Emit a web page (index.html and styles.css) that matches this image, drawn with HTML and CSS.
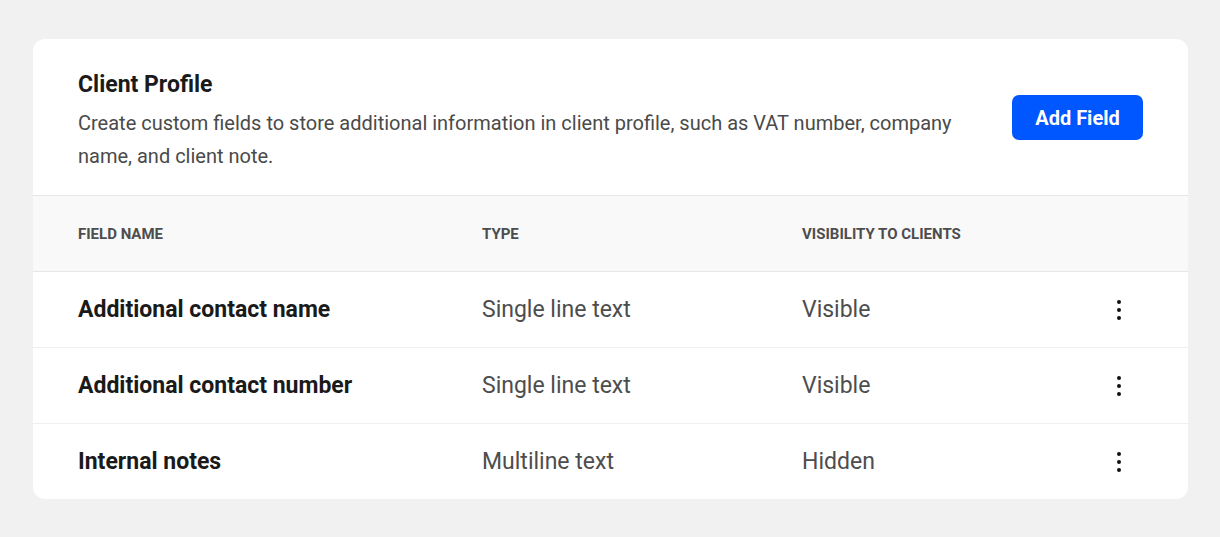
FILE: index.html
```html
<!DOCTYPE html>
<html lang="en">
<head>
  <meta charset="UTF-8">
  <title>Client Profile</title>
  <link rel="stylesheet" href="styles.css">
</head>
<body>
  <div class="card">
    <div class="card-head">
      <div class="card-intro">
        <h2 class="card-title">Client Profile</h2>
        <p class="card-desc">Create custom fields to store additional information in client profile, such as VAT number, company name, and client note.</p>
      </div>
      <button class="btn-primary">Add Field</button>
    </div>
    <div class="fields">
      <div class="fields-row fields-head">
        <span>Field name</span>
        <span>Type</span>
        <span>Visibility to clients</span>
        <span></span>
      </div>
      <div class="fields-row">
        <span class="field-name">Additional contact name</span>
        <span class="field-cell">Single line text</span>
        <span class="field-cell">Visible</span>
        <button class="more-btn" aria-label="More"><i></i><i></i><i></i></button>
      </div>
      <div class="fields-row">
        <span class="field-name">Additional contact number</span>
        <span class="field-cell">Single line text</span>
        <span class="field-cell">Visible</span>
        <button class="more-btn" aria-label="More"><i></i><i></i><i></i></button>
      </div>
      <div class="fields-row">
        <span class="field-name">Internal notes</span>
        <span class="field-cell">Multiline text</span>
        <span class="field-cell">Hidden</span>
        <button class="more-btn" aria-label="More"><i></i><i></i><i></i></button>
      </div>
    </div>
  </div>
</body>
</html>
```

FILE: styles.css
```css
body {
  margin: 0;
  padding: 39px 32px 39px 33px;
  background: #f1f1f1;
  font-family: Roboto, "Liberation Sans", sans-serif;
  color: #1a1a1a;
}

.card {
  background: #fff;
  border-radius: 12px;
  overflow: hidden;
}

.card-head {
  display: flex;
  align-items: center;
  gap: 48px;
  padding: 32px 45px 22px;
  border-bottom: 1px solid #e6e6e6;
}

.card-intro {
  flex: 1;
}

.card-title {
  margin: 0 0 8px;
  font-size: 23px;
  line-height: 28px;
  font-weight: 700;
}

.card-desc {
  margin: 0;
  font-size: 20px;
  line-height: 33px;
  color: #4a4a4a;
}

.btn-primary {
  font-family: inherit;
  font-size: 20px;
  font-weight: 700;
  color: #fff;
  background: #0057ff;
  border: none;
  border-radius: 7px;
  height: 45px;
  width: 131px;
  margin-top: -9px;
}

.fields-row {
  display: grid;
  grid-template-columns: 404px 320px 1fr 48px;
  align-items: center;
  height: 75px;
  padding: 0 45px;
  border-bottom: 1px solid #efefef;
}
.fields-row:last-child {
  border-bottom: none;
}

.fields-head {
  background: #f9f9f9;
  border-bottom-color: #e6e6e6;
  font-size: 15px;
  font-weight: 700;
  text-transform: uppercase;
  color: #4d4d4d;
}

.field-name {
  font-size: 23px;
  font-weight: 700;
}

.field-cell {
  font-size: 23px;
  color: #4d4d4d;
}

.more-btn {
  display: flex;
  flex-direction: column;
  align-items: center;
  gap: 4px;
  background: none;
  border: none;
  padding: 0;
  cursor: pointer;
}
.more-btn i {
  width: 4px;
  height: 4px;
  border-radius: 50%;
  background: #111;
}
```
